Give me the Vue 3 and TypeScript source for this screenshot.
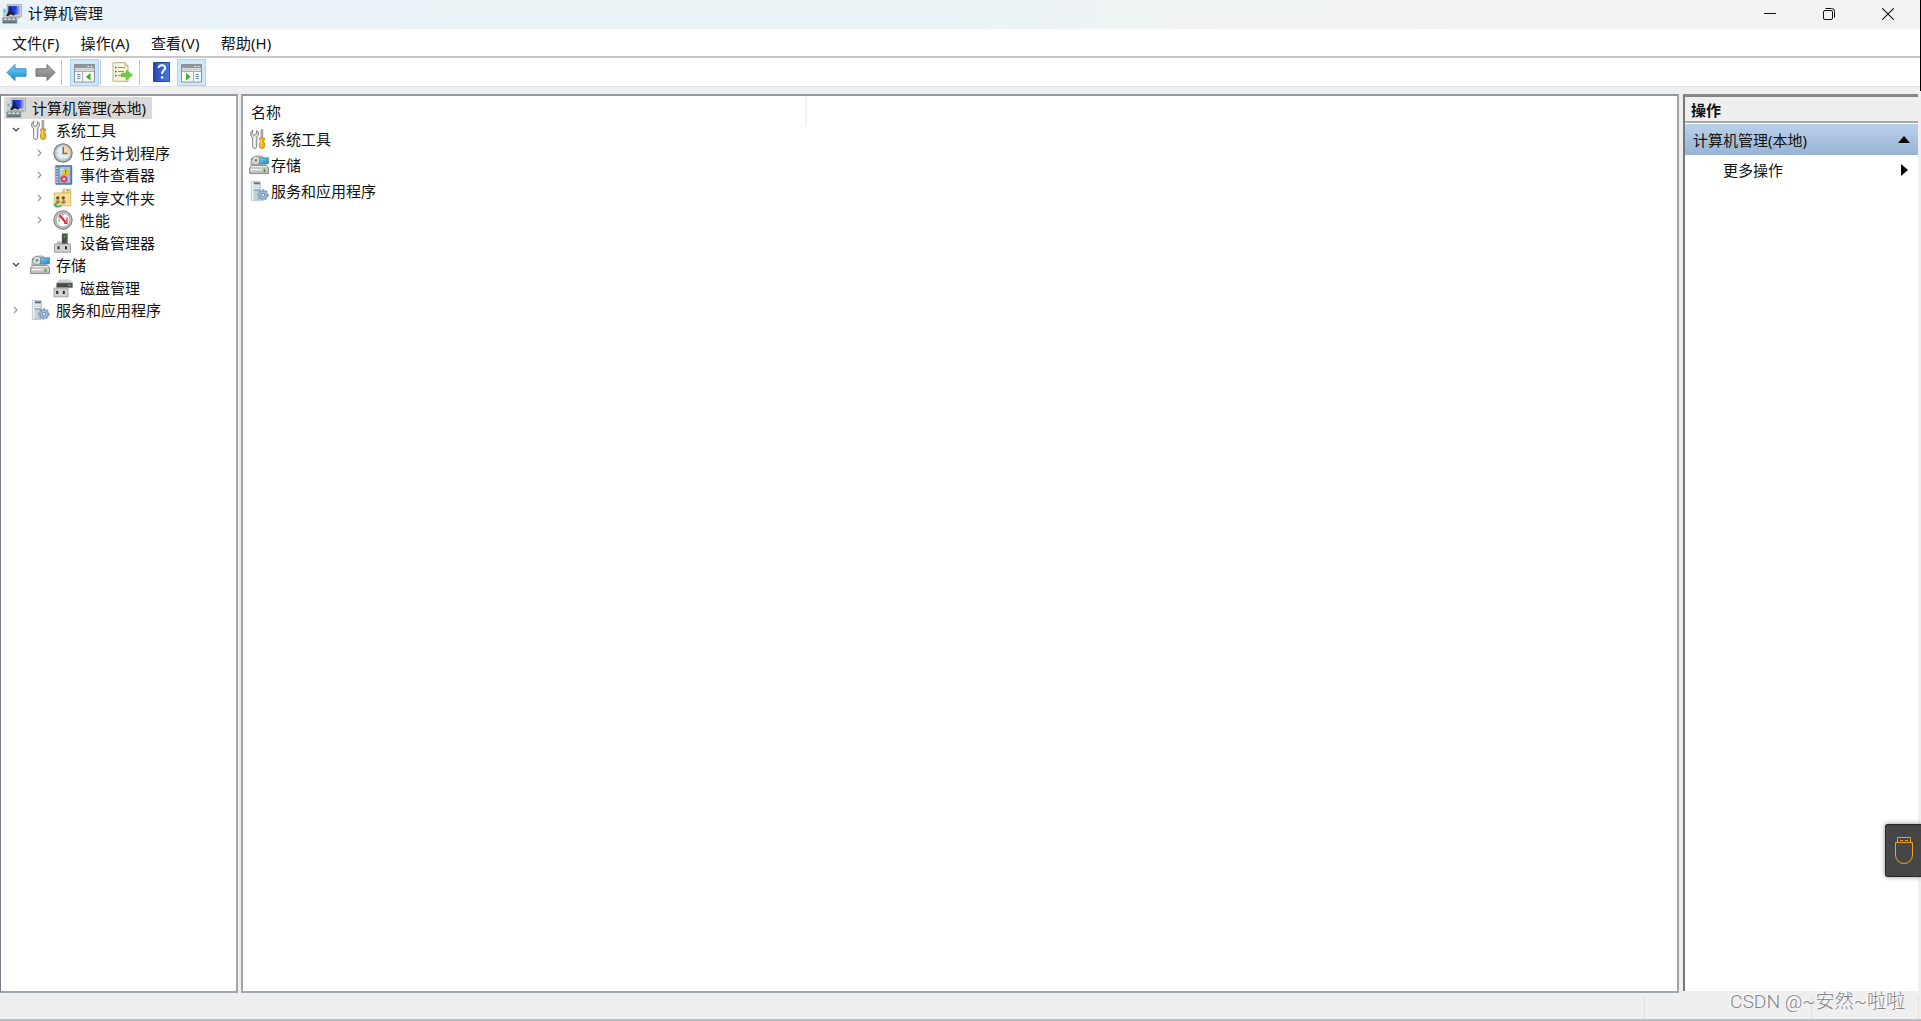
<script setup lang="ts">
interface TreeItem {
  label: string
  icon: string
  level: number
  arrow?: 'open' | 'closed'
}

const menus: string[] = ['文件(F)', '操作(A)', '查看(V)', '帮助(H)']

const tree: TreeItem[] = [
  { label: '系统工具', icon: 'tools', level: 1, arrow: 'open' },
  { label: '任务计划程序', icon: 'clock', level: 2, arrow: 'closed' },
  { label: '事件查看器', icon: 'events', level: 2, arrow: 'closed' },
  { label: '共享文件夹', icon: 'shared', level: 2, arrow: 'closed' },
  { label: '性能', icon: 'perf', level: 2, arrow: 'closed' },
  { label: '设备管理器', icon: 'device', level: 2 },
  { label: '存储', icon: 'storage', level: 1, arrow: 'open' },
  { label: '磁盘管理', icon: 'disk', level: 2 },
  { label: '服务和应用程序', icon: 'services', level: 1, arrow: 'closed' },
]

const list = [
  { label: '系统工具', icon: 'tools' },
  { label: '存储', icon: 'storage' },
  { label: '服务和应用程序', icon: 'services' },
]
</script>

<template>
  <div class="window">
    <svg class="defs" width="0" height="0" aria-hidden="true">
      <defs>
        <linearGradient id="gBlue" x1="0" y1="0" x2="1" y2="0">
          <stop offset="0" stop-color="#1424c4" /><stop offset=".6" stop-color="#2440e8" /><stop offset="1" stop-color="#b4ccff" />
        </linearGradient>
        <linearGradient id="gArrow" x1="0" y1="0" x2="0" y2="1">
          <stop offset="0" stop-color="#7fd3f8" /><stop offset="1" stop-color="#1687d3" />
        </linearGradient>
        <linearGradient id="gGray" x1="0" y1="0" x2="0" y2="1">
          <stop offset="0" stop-color="#b0b0b0" /><stop offset="1" stop-color="#777" />
        </linearGradient>
        <linearGradient id="gMetal" x1="0" y1="0" x2="0" y2="1">
          <stop offset="0" stop-color="#f4f4f4" /><stop offset="1" stop-color="#b2b4b6" />
        </linearGradient>
        <linearGradient id="gHelp" x1="0" y1="0" x2="1" y2="0">
          <stop offset="0" stop-color="#23429f" /><stop offset=".25" stop-color="#3157c4" /><stop offset="1" stop-color="#4c78dc" />
        </linearGradient>
        <linearGradient id="gCyan" x1="0" y1="0" x2="1" y2="1">
          <stop offset="0" stop-color="#7dd3f4" /><stop offset="1" stop-color="#1c84bb" />
        </linearGradient>
      </defs>
      <symbol id="computer" viewBox="0 0 20 20">
        <path d="M5 .6h14.5v12H5z" fill="#d3cfc0" stroke="#a9a79a" stroke-width=".8" />
        <path d="M6.3 2h12v8.6h-12z" fill="url(#gBlue)" />
        <path d="M1 4.5h4v8H1z" fill="#c3ccd1" /><path d="M1.6 6h1.6v2H1.6z" fill="#28c8e8" />
        <circle cx="8.4" cy="5" r="1.3" fill="#18243c" />
        <path d="M7.4 6.2h2l3.6 4.6-1 1-3.4-1.9-2.2 2H4.2l1.4-2.8z" fill="#18243c" />
        <path d="M12.5 12.8H18v1.6h-5.5z" fill="#b3b2a8" />
        <path d="M1 13.2h12.5l1.5 1.8v4.3H.6v-4.3z" fill="#7d8c94" stroke="#a0adb2" stroke-width=".8" />
        <path d="M2.2 15.3h2.6M6.2 15.3h2.6M10.4 15.3H13" stroke="#e0e9ea" stroke-width="1.4" />
        <path d="M1 18.3h13.5" stroke="#56646d" />
      </symbol>
      <symbol id="tools" viewBox="0 0 20 20">
        <path d="M3.8 1L3 4.6l2 1.9 2.2-1.3.6-3.7c2.2 1.5 2.2 4.6.2 6.3L7.6 18c-.2 2-3.7 2-3.8 0L3.6 8.6C.8 7 1 2.6 3.8 1z" fill="#dfe1e2" stroke="#7a7e81" stroke-width="1" />
        <path d="M5.2 8.5v9.5" stroke="#fff" stroke-width="1.2" />
        <path d="M12 .5h1.8v8.2H12z" fill="#b8bec3" stroke="#72787e" stroke-width=".6" />
        <path d="M10.6 9h4.8v2.3l-1 1 1.2 2v3.3c0 2.4-5.2 2.4-5.2 0v-3.3l1.2-2-1-1z" fill="#f0ad10" stroke="#ad7608" stroke-width=".7" />
        <path d="M12.2 9.8v8.2" stroke="#ffe27b" />
      </symbol>
      <symbol id="clock" viewBox="0 0 20 20">
        <circle cx="10" cy="10" r="9.1" fill="#c6c8ca" stroke="#7d8286" stroke-width="1.3" />
        <circle cx="10" cy="10" r="7.2" fill="#e7edf4" stroke="#a9aeb2" stroke-width=".8" />
        <path d="M10 3a7 7 0 0 1 6.7 7H10z" fill="#f9d78c" />
        <path d="M10.2 4v6.6h4.3" fill="none" stroke="#5a7391" stroke-width="1.5" />
        <path d="M4 10h1M10 15v1" stroke="#9aa5b0" />
      </symbol>
      <symbol id="events" viewBox="0 0 20 20">
        <path d="M2.8.8h15.9v18.4H2.8z" fill="#6785b8" stroke="#506b96" />
        <path d="M6.5 2h10.6v15.8H6.5z" fill="#a9c6e8" />
        <path d="M7.5 4.5h3M7.5 7h2M7.5 9.5h1.5" stroke="#e8f4ff" />
        <path d="M1.3 3.3h4M1.3 6.1h4M1.3 8.9h4M1.3 11.7h4M1.3 14.5h4M1.3 17.3h4" stroke="#c3cbd4" stroke-width="1.4" />
        <path d="M12.7 3l3.9 6.8H8.8z" fill="#f7dc22" stroke="#cfa416" stroke-width=".6" /><path d="M12.7 5.2v2.5M12.7 8.3v.9" stroke="#454020" />
        <circle cx="11" cy="14" r="3.6" fill="#d8455a" /><path d="M9.8 12.8l2.4 2.4m0-2.4l-2.4 2.4" stroke="#fff" />
      </symbol>
      <symbol id="shared" viewBox="0 0 20 20">
        <path d="M1.2 5h8l1.5-3.8h7v16.6H1.2z" fill="#e9c369" stroke="#d0aa51" stroke-width=".8" />
        <path d="M11.7 1.8h5.4v1.6h-5.4z" fill="#fff" /><path d="M13.6 1.8h2.6v1.4h-2.6z" fill="#4fa5dc" /><path d="M1.6 5.6h15.6v11.8H1.6z" fill="#f6df95" />
        <circle cx="4.8" cy="10" r="1.7" fill="#6b5030" /><circle cx="10.3" cy="10" r="1.7" fill="#6b5030" />
        <path d="M2.6 15.5c0-4.5 4.6-4.5 4.6-1l-2 1.6zM8.2 15.5c0-4.5 4.6-4.5 4.6-1l-2 1.6z" fill="#a08a52" />
        <path d="M1.8 17c2.2 2.2 4.6 2 6.6.4M5 15.4l-3.6 1.2 2 2.6" stroke="#36b07c" stroke-width="1.4" fill="none" />
      </symbol>
      <symbol id="perf" viewBox="0 0 20 20">
        <circle cx="10" cy="10" r="9.1" fill="#d6d4d1" stroke="#83807c" stroke-width="1.2" />
        <circle cx="10" cy="10" r="7.1" fill="#fff" stroke="#8c8a88" stroke-width=".9" />
        <path d="M6 6v6M9 4.7h2" stroke="#8b9298" fill="none" />
        <path d="M6.6 5l6.2 7.6" stroke="#e0202a" stroke-width="2.1" /><path d="M14 7.5v5.8h-2.8" fill="none" stroke="#e0202a" stroke-width="1.2" />
      </symbol>
      <symbol id="device" viewBox="0 0 20 20">
        <path d="M8.8.5h6V11h-6z" fill="#4a4c4c" /><path d="M13.8.5h1.3V11h-1.3z" fill="#8a8a8a" />
        <path d="M10.5 2.5h2v2h-2z" fill="#3bb342" />
        <path d="M4 8.5h5v3H4z" fill="#b8b8b8" /><path d="M1.6 11h15.8v8.2H1.6z" fill="#d2d2d2" stroke="#9b9b9b" />
        <path d="M4.5 13.3h2v3h-2zM12 13.3h2v3h-2z" fill="#2c2c2c" />
      </symbol>
      <symbol id="storage" viewBox="0 0 20 20">
        <path d="M1.5 10L3 3.5 7 1h6l3 3v6z" fill="#c9cdce" stroke="#909394" stroke-width=".7" />
        <ellipse cx="7" cy="5.4" rx="4.6" ry="4" fill="#dde0e0" stroke="#8f9595" stroke-width=".9" /><circle cx="7" cy="5.4" r="1.4" fill="#808686" />
        <path d="M2 5.2l1.8-2" stroke="#3dad50" stroke-width="1.3" />
        <path d="M10.6 2.8h9v6h-9z" fill="url(#gCyan)" stroke="#4183a5" stroke-width=".8" />
        <path d="M2.6 10.4h14.9l2 2.6v5.6H.6V13z" fill="url(#gMetal)" stroke="#7f8183" stroke-width=".9" />
        <path d="M1 13h18" stroke="#979a9b" stroke-width=".7" /><path d="M14.6 13.8h1.8v3.4h-1.8z" fill="#38b326" /><path d="M2 14.5h10" stroke="#fff" />
      </symbol>
      <symbol id="disk" viewBox="0 0 20 20">
        <path d="M6 1.5h11.5L19.6 5H3.6z" fill="#d0d2d3" /><path d="M3.6 5h16v4.6h-16z" fill="#45494a" stroke="#85888a" stroke-width=".6" />
        <path d="M15 6.7h3v1.2h-3z" fill="#46d54e" />
        <path d="M1 10.2h14v8.6H1z" fill="#d2d2d2" stroke="#a0a0a0" /><path d="M3.2 12.7h2v3.2h-2zM9.8 12.7h2v3.2h-2z" fill="#2c2c2c" />
      </symbol>
      <symbol id="services" viewBox="0 0 20 20">
        <path d="M2.4.8h8.8v18.4H2.4z" fill="#c5d0d7" stroke="#8fa0ab" stroke-width=".7" /><path d="M2.6 1h1.8v18H2.6z" fill="#eef2f4" />
        <path d="M5 1.5h5.8v1.6H5z" fill="#5d707c" /><path d="M5 5h5.8M5 7.4h5.8" stroke="#fafcfd" /><path d="M5 9h5.8" stroke="#7f929f" />
        <circle cx="14" cy="14" r="4.9" fill="#9cbad4" stroke="#6f97ba" stroke-width="1.5" stroke-dasharray="2 1.6" />
        <circle cx="14" cy="14" r="3.7" fill="#a4c0da" stroke="#6f97ba" stroke-width=".5" /><circle cx="14" cy="14" r="1.6" fill="#f7fafc" stroke="#4a7ba3" stroke-width=".8" />
      </symbol>
      <symbol id="arrow" viewBox="0 0 21 19">
        <path d="M1 9.5L9 1.5v4.3h11v7.4H9v4.3z" stroke-width="1" stroke-linejoin="round" />
      </symbol>
      <symbol id="pane" viewBox="0 0 21 19">
        <path d="M.5.5h20v17.5H.5z" fill="#f9f9f8" stroke="#8b9097" />
        <path d="M1 1h19v3H1z" fill="#8f969e" /><path d="M13.5 2.5H15M16.8 2.5h1.5" stroke="#fff" stroke-width="1.2" />
        <path d="M1 5.5h19" stroke="#c3c8cc" stroke-width="2" /><path d="M8.5 7.5V18M1 7.5h19" stroke="#a5abb1" />
        <path d="M3 10.5h3.5M3 12.5h3.5M3 14.5h3.5" stroke="#6a8cb4" />
      </symbol>
      <symbol id="pane-right" viewBox="0 0 21 19">
        <path d="M.5.5h20v17.5H.5z" fill="#f9f9f8" stroke="#8b9097" />
        <path d="M1 1h19v3H1z" fill="#8f969e" /><path d="M13.5 2.5H15M16.8 2.5h1.5" stroke="#fff" stroke-width="1.2" />
        <path d="M1 5.5h19" stroke="#c3c8cc" stroke-width="2" /><path d="M12.5 7.5V18M1 7.5h19" stroke="#a5abb1" />
        <path d="M14.5 10.5H18M14.5 12.5H18M14.5 14.5H18" stroke="#6a8cb4" />
      </symbol>
    </svg>

    <header class="titlebar">
      <svg class="app-icon"><use href="#computer" /></svg>
      <span class="title">计算机管理</span>
      <div class="controls">
        <svg width="12" height="12"><path d="M0 5.5h12" stroke="#111" /></svg>
        <svg width="12" height="12" fill="none" stroke="#111">
          <rect x=".5" y="2.5" width="9" height="9" rx="1.5" /><path d="M2.5.5h6a3 3 0 0 1 3 3v6" />
        </svg>
        <svg width="12" height="12"><path d="M.3.3l11.4 11.4M11.7.3L.3 11.7" stroke="#111" stroke-width="1.1" /></svg>
      </div>
    </header>

    <nav class="menubar">
      <span v-for="m in menus" :key="m">{{ m }}</span>
    </nav>

    <div class="toolbar">
      <svg class="nav-arrow back"><use href="#arrow" /></svg>
      <svg class="nav-arrow forward"><use href="#arrow" /></svg>
      <i class="sep first" />
      <span class="tool active">
        <svg width="21" height="19"><use href="#pane" /><path d="M16.5 9v7.4l-4.6-3.7z" fill="#3fae25" /></svg>
      </span>
      <i class="sep" />
      <svg class="export" viewBox="0 0 21 20">
        <path d="M1 .7h12l3 3v15.6H1z" fill="#fcf6d9" stroke="#b8ae8c" />
        <path d="M13 .7v3h3" fill="#e8dfbd" stroke="#b8ae8c" />
        <path d="M3 5.5h1.5M3 9.5h1.5M3 13.5h1.5" stroke="#555" stroke-width="1.5" />
        <path d="M6 5.5h7M6 9.5h6M6 13.5h5" stroke="#8d89a0" stroke-width="1.2" />
        <path d="M9.5 11.2h4.8V8.2l6.2 4.8-6.2 4.8v-3H9.5z" fill="#6bd13a" stroke="#4eac28" stroke-width=".6" />
      </svg>
      <i class="sep" />
      <svg class="help" viewBox="0 0 17 20">
        <path d="M.5.5h16v19H.5z" fill="url(#gHelp)" stroke="#2f4c94" />
        <path d="M5.5 6c.4-4 7.5-3.5 6.5.5-.5 2-3 2.3-3 5.5" fill="none" stroke="#fff" stroke-width="2" /><path d="M8 14.3h2.3v2.2H8z" fill="#fff" />
      </svg>
      <span class="tool active">
        <svg width="21" height="19"><use href="#pane-right" /><path d="M5 9v7.4l4.6-3.7z" fill="#3fae25" /></svg>
      </span>
    </div>

    <main class="content">
      <aside class="tree">
        <div class="root">
          <svg class="icon"><use href="#computer" /></svg>
          <span>计算机管理(本地)</span>
        </div>
        <div v-for="t in tree" :key="t.label" class="node" :class="'level' + t.level">
          <span class="chevron">
            <svg v-if="t.arrow === 'open'" width="8" height="6"><path d="M1 1l3 3 3-3" fill="none" stroke="#404040" stroke-width="1.2" /></svg>
            <svg v-else-if="t.arrow" width="6" height="8"><path d="M1 1l3 3-3 3" fill="none" stroke="#969696" stroke-width="1.1" /></svg>
          </span>
          <svg class="icon"><use :href="'#' + t.icon" /></svg>
          <span>{{ t.label }}</span>
        </div>
      </aside>

      <section class="list">
        <div class="column">名称</div>
        <div v-for="l in list" :key="l.label" class="row">
          <svg class="icon"><use :href="'#' + l.icon" /></svg>
          <span>{{ l.label }}</span>
        </div>
      </section>

      <aside class="actions">
        <div class="heading">操作</div>
        <div class="group">
          <span>计算机管理(本地)</span>
          <svg width="12" height="7"><path d="M0 7l6-7 6 7z" /></svg>
        </div>
        <div class="more">
          <span>更多操作</span>
          <svg width="7" height="12"><path d="M0 0l7 6-7 6z" /></svg>
        </div>
      </aside>
    </main>

    <footer class="status"><i /><i /><i /></footer>

    <div class="edge" />
    <div class="usb">
      <svg width="18" height="27" fill="none" stroke="#f5a124">
        <path d="M2.5 5V.5h13V5M.5 5.5h17V18a8.5 8.5 0 0 1-17 0zM5 3.5h3M10 3.5h3" />
      </svg>
    </div>
    <div class="watermark">CSDN @~安然~啦啦</div>
  </div>
</template>

<style>
body {
  margin: 0;
  overflow: hidden;
}
</style>

<style scoped>
.window {
  position: relative;
  display: flex;
  flex-direction: column;
  width: 1921px;
  height: 1021px;
  background: #efefef;
  color: #111;
  font: 15px/22px "Noto Sans", "Noto Sans CJK SC", sans-serif;
  box-sizing: border-box;
  overflow: hidden;
}
.window * {
  box-sizing: border-box;
}
.window svg {
  flex: none;
}
.defs {
  position: absolute;
}
.titlebar {
  display: flex;
  align-items: center;
  height: 29px;
  padding: 0 0 1px 2px;
  background: linear-gradient(90deg, #eaf3f8 0, #ecf3f6 50%, #f0f3f0 70%, #f3f2f0 80%);
}
.app-icon {
  width: 20px;
  height: 20px;
}
.title {
  margin: -2px 0 0 6px;
}
.controls {
  display: flex;
  gap: 47px;
  margin-left: auto;
  padding-right: 27px;
}
.menubar {
  display: flex;
  gap: 21.3px;
  height: 29px;
  padding: 3px 0 0 12px;
  background: #fff;
  border-bottom: 2px solid #c6c6ca;
}
.menubar span {
  letter-spacing: 0.1px;
}
.toolbar {
  display: flex;
  align-items: center;
  height: 28px;
  padding-left: 6px;
  background: #fff;
}
.nav-arrow {
  width: 21px;
  height: 19px;
}
.back {
  fill: url(#gArrow);
  stroke: #2e8fcb;
}
.forward {
  margin-left: 8px;
  fill: url(#gGray);
  stroke: #747474;
  transform: scaleX(-1);
}
.sep {
  width: 1px;
  height: 25px;
  background: #c4c4c4;
}
.sep.first {
  margin: 0 8px 0 5px;
}
.tool {
  display: flex;
  align-items: center;
  justify-content: center;
  width: 29px;
  height: 27px;
  padding-top: 3px;
}
.tool.active {
  background: #cce8ff;
  border: 1px solid #a5d5fb;
}
.tool + .sep {
  margin-left: 1px;
}
.export {
  width: 21px;
  height: 20px;
  margin: 0 6px 0 11px;
}
.help {
  width: 17px;
  height: 20px;
  margin: 0 7px 0 13px;
}
.content {
  display: flex;
  height: 907px;
  padding-top: 7px;
  border-top: 1px solid #e3e3e3;
}
.tree,
.list {
  background: #fff;
  border: 2px solid #a1a5ad;
  border-top-color: #92969f;
}
.tree {
  width: 238px;
  border-left: 1px solid #777b89;
  padding: 1px 0 0 3px;
}
.root {
  display: flex;
  align-items: center;
  width: 148px;
  height: 22px;
  padding-left: 2px;
  background: #d9d9d9;
}
.root span {
  margin-left: 6px;
}
.icon {
  width: 20px;
  height: 20px;
}
.node {
  display: flex;
  align-items: center;
  height: 22.5px;
}
.level2 {
  padding-left: 24px;
}
.chevron {
  display: flex;
  justify-content: center;
  width: 24px;
}
.node .icon {
  margin: 0 6px 0 2px;
}
.level2 .icon {
  margin: 0 7px 0 1px;
}
.list {
  width: 1438px;
  margin-left: 3px;
}
.column {
  width: 564px;
  height: 30px;
  padding: 5px 0 0 8px;
  border-right: 2px solid #f5f5f5;
}
.row {
  display: flex;
  align-items: center;
  height: 26.2px;
  padding-left: 6px;
}
.row span {
  margin-left: 2px;
}
.actions {
  width: 235px;
  height: 897px;
  margin-left: 4px;
  background: #fff;
  border-left: 2px solid #777;
  border-top: 3px solid #858585;
}
.heading {
  height: 26px;
  padding: 2px 0 0 6px;
  background: #efefef;
  border-bottom: 2px solid #aaa;
  font-weight: 700;
}
.group {
  display: flex;
  align-items: center;
  justify-content: space-between;
  height: 31px;
  margin-top: 1px;
  padding: 0 8px 0 8px;
  background: linear-gradient(#bad1eb, #98b3d4);
}
.more {
  display: flex;
  align-items: center;
  justify-content: space-between;
  height: 30px;
  padding: 0 10px 0 38px;
}
.status {
  display: flex;
  justify-content: flex-end;
  height: 28px;
  padding: 3px 2px 0 0;
  border-bottom: 2px solid #b9bcc4;
}
.status i {
  border-right: 1px solid #e1e1e1;
}
.status i:nth-child(2) {
  width: 167px;
}
.status i:nth-child(3) {
  width: 107px;
}
.edge {
  position: absolute;
  top: 0;
  right: 0;
  width: 1px;
  height: 91px;
  background: #000;
}
.usb {
  position: absolute;
  top: 824px;
  right: 0;
  width: 36px;
  height: 53px;
  padding: 12px 0 0 9px;
  background: #464646;
  border: 1px solid #292929;
  border-right: 0;
  border-radius: 3px 0 0 3px;
  box-shadow: 0 0 5px rgba(0, 0, 0, 0.45);
  line-height: 0;
}
.watermark {
  position: absolute;
  top: 989px;
  left: 1730px;
  color: #858585;
  font: 300 19.2px/26px "Roboto", "Noto Sans CJK SC", sans-serif;
  white-space: nowrap;
  text-shadow: -1px -1px 0 #fff;
}
</style>
